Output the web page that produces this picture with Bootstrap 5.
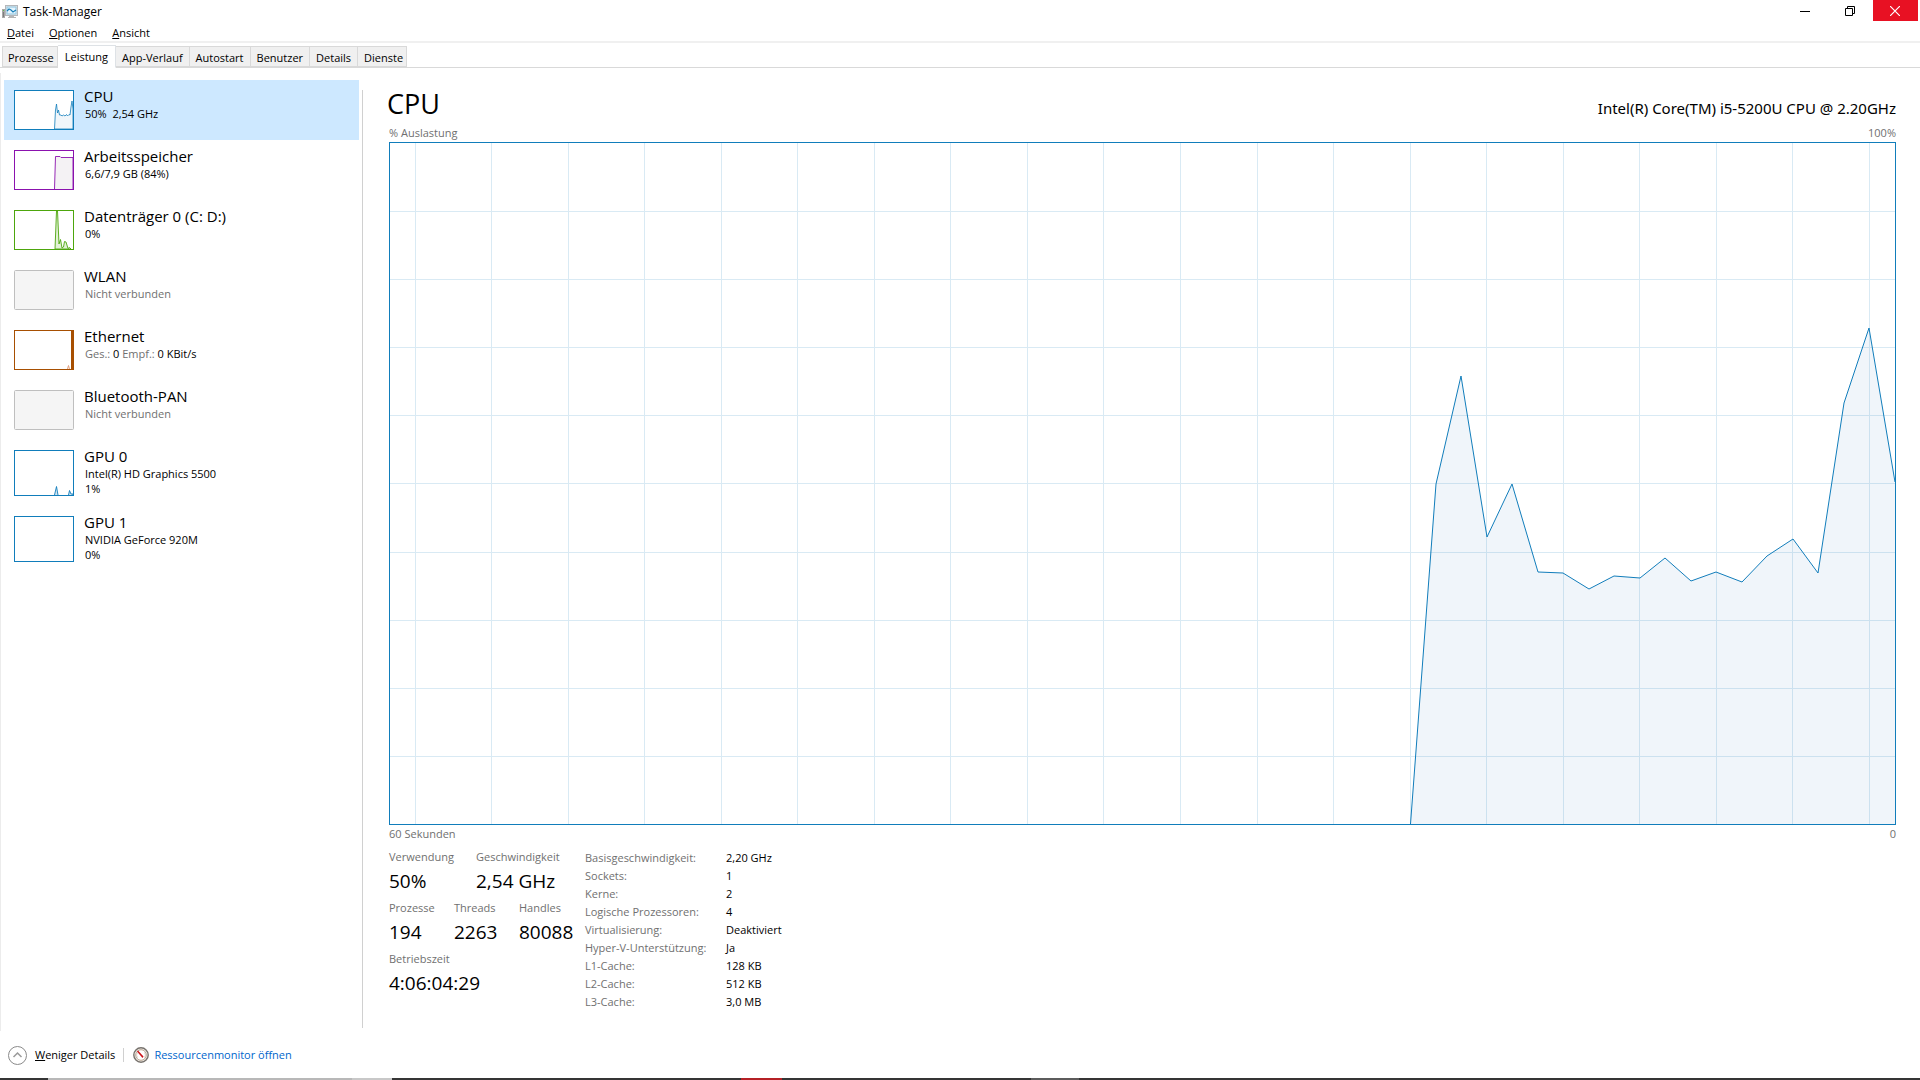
<!DOCTYPE html>
<html lang="de">
<head>
<meta charset="utf-8">
<meta name="viewport" content="width=device-width, initial-scale=1">
<title>Task-Manager</title>
<link href="https://cdn.jsdelivr.net/npm/bootstrap@5.3.0/dist/css/bootstrap.min.css" rel="stylesheet">
<style>
  body { font-family: "Open Sans", "Noto Sans", sans-serif; font-size: 11px; line-height: 16px; color: #000; background: #fff; }
  button { color: #000; }
  .plain-btn { border: 0; background: transparent; padding: 0; line-height: 16px; text-align: left; }
  .title-bar { height: 24px; padding-left: 2px; }
  .title-bar .app-name { font-size: 12px; padding-left: 4px; }
  .win-btn { width: 45px; height: 21px; border: 0; background: transparent; padding: 0 2px 0 0; }
  .win-close { background: #e81123; margin-right: 2px; }
  .menu-bar { height: 19px; gap: 15px; padding-left: 7px; border-bottom: 2px solid #f0f0f0; }
  .menu-bar button { height: 16px; }
  .tm-tabs { height: 25px; padding-left: 2px; border-bottom: 1px solid #d9d9d9; }
  .tm-tabs .nav-link { color: #000; background: #f0f0f0; border: 1px solid #d9d9d9; border-left-width: 0; border-radius: 0; height: 21px; padding: 3px 6px 1px; line-height: 16px; margin: 0; }
  .tm-tabs .nav-item:first-child .nav-link { border-left-width: 1px; padding-left: 5px; padding-right: 3px; }
  .tm-tabs .nav-item:last-child .nav-link { padding-right: 3px; }
  .tm-tabs .nav-link.active { height: 23px; background: #fff; border-bottom-color: #fff; padding: 2px 7px; margin-bottom: -1px; }
  .workspace { margin-top: 5px; border-left: 1px solid #ececec; }
  .side { width: 358px; padding: 7px 0 0 3px; }
  .side .list-group-item { border: 0; border-radius: 0; height: 60px; padding: 8px 10px; display: flex; gap: 10px; color: #000; background: #fff; margin: 0; text-align: left; }
  .side .list-group-item.tall { height: 66px; }
  .side .list-group-item.active { background: #cde8ff; }
  .side svg { flex: none; margin-top: 2px; }
  .res-name { font-size: 15px; line-height: 16px; margin-bottom: 2px; }
  .res-sub { line-height: 15px; padding-left: 1px; }
  .muted-tx { color: #707070; }
  .split { width: 1px; background: #d0d0d0; margin: 17px 0 3px 3px; }
  .pane { padding: 13px 24px 20px 26px; }
  .pane-title { font-size: 27px; line-height: 36px; font-weight: 400; margin: 0 0 2px -2px; }
  .cpu-name { font-family: "Noto Sans", "Open Sans", sans-serif; font-size: 15px; line-height: 20px; padding-top: 12px; }
  .axis { height: 18px; padding-top: 1px; }
  .graph { flex: 1 1 0; min-height: 200px; width: 100%; border: 1px solid #117dbb; }
  .big { font-size: 19px; line-height: 28px; padding-top: 2px; }
  .stat-row { height: 51px; }
  .stats { margin-top: 6px; }
  .stat-left { width: 196px; }
  .stat-wide { width: 87px; }
  .stat-slim { width: 65px; }
  .spec td { padding: 0; height: 18px; line-height: 18px; }
  .spec td:first-child { width: 141px; }
  .foot { height: 47px; padding: 1px 0 0 8px; }
  .foot .vline { width: 1px; height: 14px; background: #d0d0d0; margin: 0 9px 0 8px; }
  .foot a { color: #0066cc; text-decoration: none; padding-left: 5px; }
  .edge { height: 2px; background: #353535; }
</style>
<script src="https://cdn.jsdelivr.net/npm/bootstrap@5.3.0/dist/js/bootstrap.bundle.min.js"></script>
</head>
<body>
<div class="d-flex flex-column min-vh-100">

  <header>
    <div class="title-bar d-flex align-items-start">
      <svg class="mt-1" width="17" height="16" viewBox="0 0 17 16" aria-hidden="true">
        <rect x="0" y="5" width="3" height="9" fill="#a8a8a8"/><rect x="1" y="6" width="1" height="1" fill="#5fc04a"/><rect x="1" y="8" width="1" height="5" fill="#7d7d7d"/>
        <rect x="3.500" y="1.500" width="12" height="10" fill="#e6e6e6" stroke="#b4b7ba"/>
        <rect x="5" y="3" width="9" height="7" fill="#e4f5ff" stroke="#8cc4e0"/>
        <path d="M5 7l2-2 2 1 2 2 3-2" fill="none" stroke="#1a7fb8" stroke-width="1.200"/>
        <path d="M7 12h5v1h2v1H6v-1h1z" fill="#b5b5b5"/>
      </svg>
      <span class="app-name pt-1">Task-Manager</span>
      <div class="ms-auto d-flex">
        <button class="win-btn" aria-label="Minimieren"><svg class="d-block mx-auto" width="10" height="10" viewBox="0 0 10 10"><path d="M0 5.500h10" stroke="#000"/></svg></button>
        <button class="win-btn" aria-label="Verkleinern"><svg class="d-block mx-auto" width="10" height="10" viewBox="0 0 10 10" fill="none" stroke="#000"><path d="M.5 2.500h7v7h-7zM2.500 2.500v-2h7v7h-2"/></svg></button>
        <button class="win-btn win-close" aria-label="Schließen"><svg class="d-block mx-auto" width="10" height="10" viewBox="0 0 10 10"><path d="M0 0l10 10M10 0L0 10" stroke="#fff" stroke-width="1.200"/></svg></button>
      </div>
    </div>
    <div class="menu-bar d-flex align-items-center">
      <button class="plain-btn"><u>D</u>atei</button>
      <button class="plain-btn"><u>O</u>ptionen</button>
      <button class="plain-btn"><u>A</u>nsicht</button>
    </div>
    <ul class="tm-tabs nav nav-tabs align-items-end flex-nowrap">
      <li class="nav-item"><button class="nav-link">Prozesse</button></li>
      <li class="nav-item"><button class="nav-link active">Leistung</button></li>
      <li class="nav-item"><button class="nav-link">App-Verlauf</button></li>
      <li class="nav-item"><button class="nav-link">Autostart</button></li>
      <li class="nav-item"><button class="nav-link">Benutzer</button></li>
      <li class="nav-item"><button class="nav-link">Details</button></li>
      <li class="nav-item"><button class="nav-link">Dienste</button></li>
    </ul>
  </header>

  <main class="workspace d-flex flex-grow-1">
    <div class="side list-group flex-shrink-0">
      <button class="list-group-item active">
        <svg width="60" height="40" viewBox="0 0 60 40"><rect x=".5" y=".5" width="59" height="39" fill="#fff" stroke="#117dbb"/><path d="M40.500 39L41.500 20 42.500 14 43.500 23 44.500 20 45.500 25 47 25 48 26 49.500 25 51 26 52.500 24.500 53.500 26 55 24.500 56 25 57 17 58 11 59 19V39z" fill="#f1f6fa" stroke="#117dbb" stroke-width=".8"/></svg>
        <div><div class="res-name">CPU</div><div class="res-sub">50% &nbsp;2,54 GHz</div></div>
      </button>
      <button class="list-group-item">
        <svg width="60" height="40" viewBox="0 0 60 40"><rect x=".5" y=".5" width="59" height="39" fill="#fff" stroke="#8b12ae"/><path d="M40.500 39L41.500 6.500H46L47 7.500H59V39" fill="#f4f2f4" stroke="#8b12ae" stroke-width=".9"/></svg>
        <div><div class="res-name">Arbeitsspeicher</div><div class="res-sub">6,6/7,9 GB (84%)</div></div>
      </button>
      <button class="list-group-item">
        <svg width="60" height="40" viewBox="0 0 60 40"><rect x=".5" y=".5" width="59" height="39" fill="#fff" stroke="#4da60c"/><path d="M41 39L42.500 1H43.500L45 34 46.500 29.500 48 38 49.500 37 50.500 31.500 52 32 54 38.500 55.500 37.500 57 39z" fill="#e2f1d6" stroke="#4da60c" stroke-width=".9"/></svg>
        <div><div class="res-name">Datenträger 0 (C: D:)</div><div class="res-sub">0%</div></div>
      </button>
      <button class="list-group-item">
        <svg width="60" height="40" viewBox="0 0 60 40"><rect x=".5" y=".5" width="59" height="39" rx="1" fill="#f5f5f5" stroke="#bfbfbf"/></svg>
        <div><div class="res-name">WLAN</div><div class="res-sub muted-tx">Nicht verbunden</div></div>
      </button>
      <button class="list-group-item">
        <svg width="60" height="40" viewBox="0 0 60 40"><rect x=".5" y=".5" width="59" height="39" fill="#fff" stroke="#a74f01"/><rect x="57" y="1" width="3" height="38" fill="#a74f01"/><path d="M53.500 39L54.500 35.500 55.500 39" fill="none" stroke="#e2a080"/></svg>
        <div><div class="res-name">Ethernet</div><div class="res-sub"><span class="muted-tx">Ges.:</span> 0 <span class="muted-tx">Empf.:</span> 0 KBit/s</div></div>
      </button>
      <button class="list-group-item">
        <svg width="60" height="40" viewBox="0 0 60 40"><rect x=".5" y=".5" width="59" height="39" rx="1" fill="#f5f5f5" stroke="#bfbfbf"/></svg>
        <div><div class="res-name">Bluetooth-PAN</div><div class="res-sub muted-tx">Nicht verbunden</div></div>
      </button>
      <button class="list-group-item tall">
        <svg width="60" height="46" viewBox="0 0 60 46"><rect x=".5" y=".5" width="59" height="45" fill="#fff" stroke="#117dbb"/><path d="M40.500 45L42.500 36.500 44 45M54.500 45L55.500 40.500 57 44H59V45" fill="#cfe3f0" stroke="#117dbb" stroke-width=".9"/></svg>
        <div><div class="res-name">GPU 0</div><div class="res-sub">Intel(R) HD Graphics 5500<br>1%</div></div>
      </button>
      <button class="list-group-item tall">
        <svg width="60" height="46" viewBox="0 0 60 46"><rect x=".5" y=".5" width="59" height="45" fill="#fff" stroke="#117dbb"/></svg>
        <div><div class="res-name">GPU 1</div><div class="res-sub">NVIDIA GeForce 920M<br>0%</div></div>
      </button>
    </div>
    <div class="split flex-shrink-0"></div>

    <section class="pane d-flex flex-column flex-grow-1">
      <div class="d-flex justify-content-between">
        <h1 class="pane-title">CPU</h1>
        <div class="cpu-name">Intel(R) Core(TM) i5-5200U CPU @ 2.20GHz</div>
      </div>
      <div class="axis d-flex justify-content-between muted-tx"><span>% Auslastung</span><span>100%</span></div>
      <svg class="graph" viewBox="0 0 1505 681" preserveAspectRatio="none" role="img" aria-label="CPU-Auslastung">
        <path d="M1020.500 681L1046 341 1071 233 1097 394 1122 341 1148 429 1173 430 1199 446 1224 433 1250 435 1275 415 1301 438 1326 429 1352 439 1377 413 1403 396 1428 430 1454 260 1479 185 1505 339V681z" fill="#f0f5fa"/>
        <path d="M0 68.500H1505M0 136.500H1505M0 204.500H1505M0 272.500H1505M0 340.500H1505M0 409.500H1505M0 477.500H1505M0 545.500H1505M0 613.500H1505M25.500 0V681M101.500 0V681M178.500 0V681M254.500 0V681M331.500 0V681M407.500 0V681M484.500 0V681M560.500 0V681M637.500 0V681M713.500 0V681M790.500 0V681M867.500 0V681M943.500 0V681M1020.500 0V681M1096.500 0V681M1173.500 0V681M1249.500 0V681M1326.500 0V681M1402.500 0V681M1479.500 0V681" fill="none" stroke="#117dbb" stroke-opacity=".16" shape-rendering="crispEdges" vector-effect="non-scaling-stroke"/>
        <path d="M1020.500 681L1046 341 1071 233 1097 394 1122 341 1148 429 1173 430 1199 446 1224 433 1250 435 1275 415 1301 438 1326 429 1352 439 1377 413 1403 396 1428 430 1454 260 1479 185 1505 339" fill="none" stroke="#117dbb" vector-effect="non-scaling-stroke"/>
      </svg>
      <div class="axis d-flex justify-content-between muted-tx"><span>60 Sekunden</span><span>0</span></div>
      <div class="stats d-flex">
        <div class="stat-left">
          <div class="stat-row d-flex">
            <div class="stat-wide"><div class="muted-tx">Verwendung</div><div class="big">50%</div></div>
            <div><div class="muted-tx">Geschwindigkeit</div><div class="big">2,54 GHz</div></div>
          </div>
          <div class="stat-row d-flex">
            <div class="stat-slim"><div class="muted-tx">Prozesse</div><div class="big">194</div></div>
            <div class="stat-slim"><div class="muted-tx">Threads</div><div class="big">2263</div></div>
            <div><div class="muted-tx">Handles</div><div class="big">80088</div></div>
          </div>
          <div class="stat-row"><div class="muted-tx">Betriebszeit</div><div class="big">4:06:04:29</div></div>
        </div>
        <table class="spec">
          <tbody>
            <tr><td class="muted-tx">Basisgeschwindigkeit:</td><td>2,20 GHz</td></tr>
            <tr><td class="muted-tx">Sockets:</td><td>1</td></tr>
            <tr><td class="muted-tx">Kerne:</td><td>2</td></tr>
            <tr><td class="muted-tx">Logische Prozessoren:</td><td>4</td></tr>
            <tr><td class="muted-tx">Virtualisierung:</td><td>Deaktiviert</td></tr>
            <tr><td class="muted-tx">Hyper-V-Unterstützung:</td><td>Ja</td></tr>
            <tr><td class="muted-tx">L1-Cache:</td><td>128 KB</td></tr>
            <tr><td class="muted-tx">L2-Cache:</td><td>512 KB</td></tr>
            <tr><td class="muted-tx">L3-Cache:</td><td>3,0 MB</td></tr>
          </tbody>
        </table>
      </div>
    </section>
  </main>

  <footer>
    <div class="foot d-flex align-items-center">
      <button class="plain-btn d-flex align-items-center gap-2">
        <svg width="19" height="19" viewBox="0 0 19 19" fill="none"><circle cx="9.500" cy="9.500" r="9" stroke="#8a8a8a"/><path d="M5.500 11l4-4 4 4" stroke="#9a9a9a" stroke-width="1.500"/></svg>
        <span><u>W</u>eniger Details</span>
      </button>
      <div class="vline"></div>
      <svg width="16" height="16" viewBox="0 0 16 16" aria-hidden="true"><circle cx="8" cy="8" r="7.200" fill="#f4f1ec" stroke="#77726d" stroke-width="1.400"/><circle cx="8" cy="8" r="5.300" fill="#fff" stroke="#b9a591"/><path d="M4.500 10.500a4 4 0 0 1 0-5M11.500 5.500a4 4 0 0 1 0 5" stroke="#d8d0c8" fill="none"/><path d="M4 4.500L5 3.500 10.500 9.500 9.500 11z" fill="#cc1016"/></svg>
      <a href="#">Ressourcenmonitor öffnen</a>
    </div>
    <div class="edge d-flex" aria-hidden="true">
      <svg width="100%" height="2"><rect x="48" width="304" height="2" fill="#b8b8b8"/><rect x="352" width="40" height="2" fill="#c8c8c8"/><rect x="741" width="41" height="2" fill="#b52025"/><rect x="1031" width="48" height="2" fill="#5c5c5c"/></svg>
    </div>
  </footer>
</div>
</body>
</html>
